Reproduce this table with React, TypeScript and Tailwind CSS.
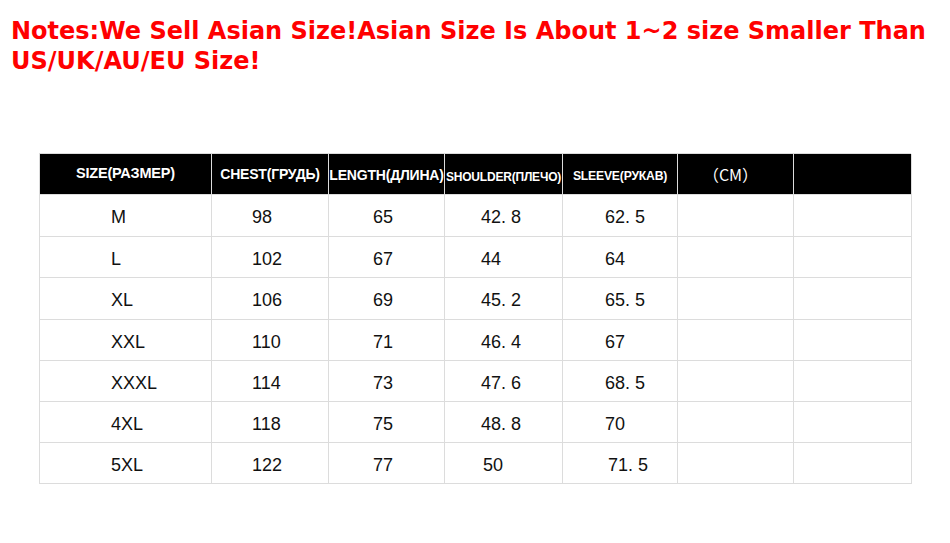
import React from "react";

interface SizeRow {
  size: string;
  chest: string;
  length: string;
  shoulder: string;
  sleeve: string;
  h: string;
}

const rows: SizeRow[] = [
  { size: "M", chest: "98", length: "65", shoulder: "42. 8", sleeve: "62. 5", h: "h-[42px]" },
  { size: "L", chest: "102", length: "67", shoulder: "44", sleeve: "64", h: "h-[41px]" },
  { size: "XL", chest: "106", length: "69", shoulder: "45. 2", sleeve: "65. 5", h: "h-[42px]" },
  { size: "XXL", chest: "110", length: "71", shoulder: "46. 4", sleeve: "67", h: "h-[41px]" },
  { size: "XXXL", chest: "114", length: "73", shoulder: "47. 6", sleeve: "68. 5", h: "h-[41px]" },
  { size: "4XL", chest: "118", length: "75", shoulder: "48. 8", sleeve: "70", h: "h-[41px]" },
  { size: "5XL", chest: "122", length: "77", shoulder: "50", sleeve: "71. 5", h: "h-[41px]" },
];

// header labels with their own font sizes, the source image squeezes some of them
const headers = [
  { label: "SIZE(РАЗМЕР)", cls: "text-[14.5px]" },
  { label: "CHEST(ГРУДЬ)", cls: "text-[14px]" },
  { label: "LENGTH(ДЛИНА)", cls: "text-[14px] pt-[3px]" },
  { label: "SHOULDER(ПЛЕЧО)", cls: "text-[12px] pt-[5px]" },
  { label: "SLEEVE(РУКАВ)", cls: "text-[12.2px] pt-[4px]" },
];

const cell = "border-r border-b border-[#dcdcdc] flex items-center";

const App: React.FC = () => {
  return (
    <div className="w-[950px] h-[543px] bg-white overflow-hidden">
      {/* Notes */}
      <div className="pl-[11px] pt-[16px] text-[#ff0000] font-bold text-[24px] leading-[30px] font-['DejaVu_Sans',sans-serif]">
        <div className="whitespace-nowrap">Notes:We Sell Asian Size!Asian Size Is About 1~2 size Smaller Than</div>
        <div>US/UK/AU/EU Size!</div>
      </div>

      {/* Size table */}
      <div className="mt-[77px] ml-[39px] w-[872px] border-l border-t border-[#dcdcdc] grid grid-cols-[172px_117px_116px_118px_115px_116px_118px] font-['Liberation_Sans',sans-serif]">
        {headers.map((h) => (
          <div key={h.label} className={`${cell} h-[41px] bg-black justify-center overflow-visible`}>
            <span className={`text-white font-bold whitespace-nowrap tracking-[-0.2px] ${h.cls}`}>{h.label}</span>
          </div>
        ))}
        <div className={`${cell} h-[41px] bg-black justify-center`}>
          <span className="text-white text-[16px] pr-[10px] font-['Noto_Sans_CJK_SC',sans-serif]">（CM）</span>
        </div>
        <div className={`${cell} h-[41px] bg-black`}></div>

        {rows.map((r) => (
          <React.Fragment key={r.size}>
            <div className={`${cell} ${r.h} pl-[71px] text-[18px] text-[#111] pt-[4px]`}>{r.size}</div>
            <div className={`${cell} ${r.h} pl-[40px] text-[18px] text-[#111] pt-[4px]`}>{r.chest}</div>
            <div className={`${cell} ${r.h} pl-[44px] text-[18px] text-[#111] pt-[4px]`}>{r.length}</div>
            <div className={`${cell} ${r.h} ${r.shoulder === "50" ? "pl-[38px]" : "pl-[36px]"} text-[18px] text-[#111] pt-[4px]`}>{r.shoulder}</div>
            <div className={`${cell} ${r.h} ${r.sleeve === "71. 5" ? "pl-[45px]" : "pl-[42px]"} text-[18px] text-[#111] pt-[4px]`}>{r.sleeve}</div>
            <div className={`${cell} ${r.h}`}></div>
            <div className={`${cell} ${r.h}`}></div>
          </React.Fragment>
        ))}
      </div>
    </div>
  );
};

export default App;
